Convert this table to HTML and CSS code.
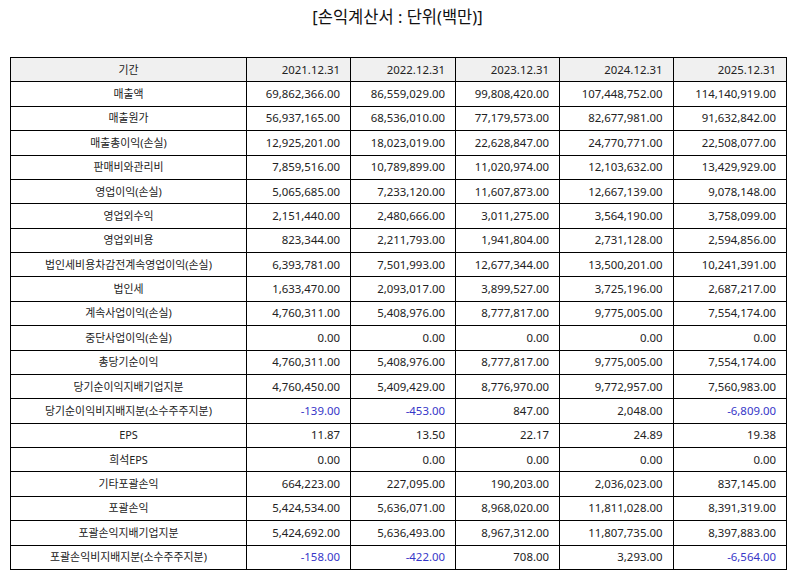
FILE: index.html
```html
<!DOCTYPE html>
<html lang="ko">
<head>
<meta charset="utf-8">
<link rel="stylesheet" href="styles.css">
</head>
<body>
<div class="title">[손익계산서 : 단위(백만)]</div>
<table class="fs">
<colgroup>
<col class="c-label"><col class="c-a"><col class="c-b"><col class="c-a"><col class="c-c"><col class="c-c">
</colgroup>
<thead>
<tr><th>기간</th><th>2021.12.31</th><th>2022.12.31</th><th>2023.12.31</th><th>2024.12.31</th><th>2025.12.31</th></tr>
</thead>
<tbody>
<tr><td>매출액</td><td>69,862,366.00</td><td>86,559,029.00</td><td>99,808,420.00</td><td>107,448,752.00</td><td>114,140,919.00</td></tr>
<tr><td>매출원가</td><td>56,937,165.00</td><td>68,536,010.00</td><td>77,179,573.00</td><td>82,677,981.00</td><td>91,632,842.00</td></tr>
<tr><td>매출총이익(손실)</td><td>12,925,201.00</td><td>18,023,019.00</td><td>22,628,847.00</td><td>24,770,771.00</td><td>22,508,077.00</td></tr>
<tr><td>판매비와관리비</td><td>7,859,516.00</td><td>10,789,899.00</td><td>11,020,974.00</td><td>12,103,632.00</td><td>13,429,929.00</td></tr>
<tr><td>영업이익(손실)</td><td>5,065,685.00</td><td>7,233,120.00</td><td>11,607,873.00</td><td>12,667,139.00</td><td>9,078,148.00</td></tr>
<tr><td>영업외수익</td><td>2,151,440.00</td><td>2,480,666.00</td><td>3,011,275.00</td><td>3,564,190.00</td><td>3,758,099.00</td></tr>
<tr><td>영업외비용</td><td>823,344.00</td><td>2,211,793.00</td><td>1,941,804.00</td><td>2,731,128.00</td><td>2,594,856.00</td></tr>
<tr><td>법인세비용차감전계속영업이익(손실)</td><td>6,393,781.00</td><td>7,501,993.00</td><td>12,677,344.00</td><td>13,500,201.00</td><td>10,241,391.00</td></tr>
<tr><td>법인세</td><td>1,633,470.00</td><td>2,093,017.00</td><td>3,899,527.00</td><td>3,725,196.00</td><td>2,687,217.00</td></tr>
<tr><td>계속사업이익(손실)</td><td>4,760,311.00</td><td>5,408,976.00</td><td>8,777,817.00</td><td>9,775,005.00</td><td>7,554,174.00</td></tr>
<tr><td>중단사업이익(손실)</td><td>0.00</td><td>0.00</td><td>0.00</td><td>0.00</td><td>0.00</td></tr>
<tr><td>총당기순이익</td><td>4,760,311.00</td><td>5,408,976.00</td><td>8,777,817.00</td><td>9,775,005.00</td><td>7,554,174.00</td></tr>
<tr><td>당기순이익지배기업지분</td><td>4,760,450.00</td><td>5,409,429.00</td><td>8,776,970.00</td><td>9,772,957.00</td><td>7,560,983.00</td></tr>
<tr><td>당기순이익비지배지분(소수주주지분)</td><td class="neg">-139.00</td><td class="neg">-453.00</td><td>847.00</td><td>2,048.00</td><td class="neg">-6,809.00</td></tr>
<tr><td>EPS</td><td>11.87</td><td>13.50</td><td>22.17</td><td>24.89</td><td>19.38</td></tr>
<tr><td>희석EPS</td><td>0.00</td><td>0.00</td><td>0.00</td><td>0.00</td><td>0.00</td></tr>
<tr><td>기타포괄손익</td><td>664,223.00</td><td>227,095.00</td><td>190,203.00</td><td>2,036,023.00</td><td>837,145.00</td></tr>
<tr><td>포괄손익</td><td>5,424,534.00</td><td>5,636,071.00</td><td>8,968,020.00</td><td>11,811,028.00</td><td>8,391,319.00</td></tr>
<tr><td>포괄손익지배기업지분</td><td>5,424,692.00</td><td>5,636,493.00</td><td>8,967,312.00</td><td>11,807,735.00</td><td>8,397,883.00</td></tr>
<tr><td>포괄손익비지배지분(소수주주지분)</td><td class="neg">-158.00</td><td class="neg">-422.00</td><td>708.00</td><td>3,293.00</td><td class="neg">-6,564.00</td></tr>
</tbody>
</table>
</body>
</html>
```
FILE: styles.css
```css
html, body {
  margin: 0;
  padding: 0;
  background: #fff;
}
body {
  font-family: "Noto Sans", "Noto Sans CJK KR", sans-serif;
  color: #222;
}
.title {
  text-align: center;
  font-size: 16.5px;
  line-height: 20px;
  padding-top: 7px;
  height: 57px;
  box-sizing: border-box;
  color: #111;
}
.fs {
  margin-left: 10px;
  width: 776px;
  border-collapse: collapse;
  table-layout: fixed;
  font-size: 11.4px;
}
.c-label { width: 236px; }
.c-a { width: 104px; }
.c-b { width: 105px; }
.c-c { width: 113.5px; }
.fs th, .fs td {
  border: 1px solid #000;
  height: 24.38px;
  padding: 0 10px 0 4px;
  box-sizing: border-box;
  white-space: nowrap;
  font-weight: normal;
  text-align: right;
  line-height: 14px;
}
.fs th {
  background: #f0f0f0;
}
.fs th:first-child, .fs td:first-child {
  text-align: center;
  padding: 0 4px;
  font-size: 10.9px;
}
.fs td.neg {
  color: #3636c8;
}
```
